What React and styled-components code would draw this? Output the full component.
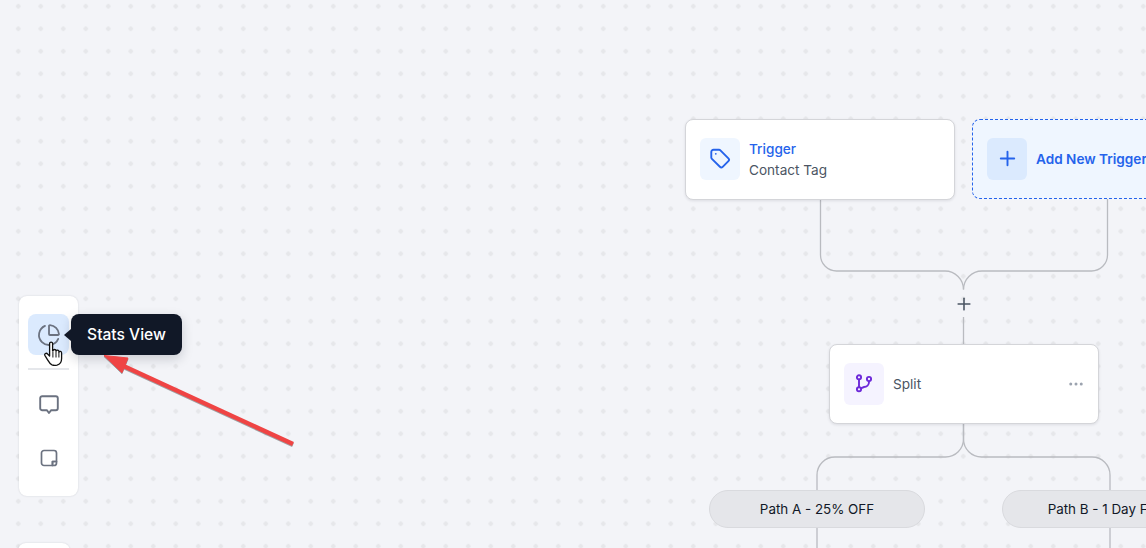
import React from 'react';
import styled, { createGlobalStyle } from 'styled-components';
import { Plus, ChartPie, Ellipsis } from 'lucide-react';

const Global = createGlobalStyle`
html, body {
  margin: 0;
  padding: 0;
  width: 100%;
  height: 100%;
  overflow: hidden;
}
body {
  font-family: Inter, "Liberation Sans", sans-serif;
}
`;

const Canvas = styled.div`
  position: relative;
  width: 1146px;
  height: 548px;
  overflow: hidden;
  background-color: #f3f4f8;
  background-image: radial-gradient(circle, #e6e7ea 2px, transparent 2.4px);
  background-size: 22.5px 22.5px;
  background-position: 7px -5px;
`;

const Wires = styled.svg`
  position: absolute;
  inset: 0;
  width: 1146px;
  height: 548px;
  pointer-events: none;
`;

const Node = styled.div`
  position: absolute;
  left: ${(p) => p.$x}px;
  top: ${(p) => p.$y}px;
  width: ${(p) => p.$w || 270}px;
  height: ${(p) => p.$h || 80.5}px;
  box-sizing: border-box;
  display: flex;
  align-items: center;
  gap: 9px;
  padding: 0 14px;
  border-radius: 8px;
  background: #fff;
  border: 1px solid #d4d5d9;
  box-shadow: 0 1px 3px rgba(17, 24, 39, 0.1);
`;

const AddNode = styled(Node)`
  background: #eff6ff;
  border: 1px dashed #2563eb;
  box-shadow: none;
`;

const IconTile = styled.div`
  flex: none;
  box-sizing: border-box;
  width: 40px;
  height: 42px;
  padding-bottom: ${(p) => (p.$lift ? 2 : 0)}px;
  border-radius: 6px;
  display: flex;
  align-items: center;
  justify-content: center;
  background: ${(p) => p.$bg};
  color: ${(p) => p.$fg};
`;

const NodeText = styled.div`
  display: flex;
  flex-direction: column;
  gap: 4px;
  padding-top: 2px;
  font-size: 13.6px;
  line-height: 17px;
`;

const NodeTitle = styled.span`
  color: #2563eb;
  font-weight: 500;
`;

const NodeSub = styled.span`
  color: #4b5563;
  font-size: 13.6px;
`;

const AddLabel = styled.span`
  color: #2563eb;
  font-size: 13.6px;
  font-weight: 600;
  white-space: nowrap;
`;

const NodeMenu = styled.div`
  margin-left: auto;
  margin-right: -1px;
  display: flex;
  color: #9ca3af;
`;

const Pill = styled.div`
  position: absolute;
  left: ${(p) => p.$x}px;
  top: 490px;
  width: 216px;
  height: 38px;
  box-sizing: border-box;
  display: flex;
  align-items: center;
  justify-content: center;
  border-radius: 19px;
  border: 1px solid #d9dade;
  background: #e5e6ea;
  color: #111827;
  font-size: 13.4px;
  white-space: nowrap;
`;

const AddStep = styled.div`
  position: absolute;
  left: 953.5px;
  top: 294px;
  width: 20px;
  height: 20px;
  display: flex;
  color: #4b5563;
`;

const Dock = styled.div`
  position: absolute;
  left: 19px;
  top: 296px;
  display: flex;
  flex-direction: column;
  gap: 47px;
`;

const Panel = styled.div`
  width: 59px;
  box-sizing: border-box;
  display: flex;
  flex-direction: column;
  align-items: center;
  padding: 18px 9px 0;
  height: 200px;
  border-radius: 8px;
  background: #fff;
  box-shadow: 0 0 2px rgba(17, 24, 39, 0.16);
`;

const MiniPanel = styled(Panel)`
  width: 52px;
  margin-left: -1px;
  height: 40px;
`;

const ToolButton = styled.div`
  position: relative;
  flex: none;
  width: 41px;
  height: ${(p) => p.$h || 41}px;
  border-radius: 8px;
  display: flex;
  align-items: center;
  justify-content: center;
  color: #6b7280;
  background: ${(p) => (p.$active ? '#dbeafe' : 'transparent')};
`;

const Divider = styled.div`
  flex: none;
  width: 41px;
  height: 2px;
  margin: 13px 0;
  background: #e5e7eb;
`;

const Tip = styled.div`
  position: absolute;
  left: 43px;
  top: 0;
  width: 111px;
  height: 41px;
  box-sizing: border-box;
  display: flex;
  align-items: center;
  justify-content: center;
  border-radius: 8px;
  background: #111827;
  color: #fff;
  font-size: 15.6px;
  font-weight: 500;
  white-space: nowrap;
  box-shadow: 0 4px 12px rgba(17, 24, 39, 0.18);

  &::before {
    content: '';
    position: absolute;
    left: -7px;
    top: 15px;
    border-style: solid;
    border-width: 6px 7px 6px 0;
    border-color: transparent #111827 transparent transparent;
  }
`;

const Hand = styled.svg`
  position: absolute;
  left: 16px;
  top: 27px;
  width: 20px;
  height: 26px;
`;

const Annotation = styled.svg`
  position: absolute;
  left: 90px;
  top: 345px;
  width: 220px;
  height: 110px;
  pointer-events: none;
  filter: drop-shadow(0 1px 0.5px rgba(0, 0, 0, 0.35));
`;

const wire = { fill: 'none', stroke: '#b9bbc0', strokeWidth: 1.3 };

function TagIcon() {
  return (
    <svg width="21" height="21" viewBox="0 0 21 21" fill="none" stroke="currentColor" strokeWidth="1.900" strokeLinejoin="round">
      <path d="M3.500 1.700H9a2 2 0 0 1 1.400.6l8 8a2 2 0 0 1 0 2.800l-5.700 5.700a2 2 0 0 1-2.800 0l-8-8a2 2 0 0 1-.6-1.400V3.900a2.200 2.200 0 0 1 2.200-2.200z" />
      <circle cx="5.800" cy="5.800" r="0.900" fill="currentColor" stroke="none" />
    </svg>
  );
}

function CommentIcon() {
  return (
    <svg width="20" height="20" viewBox="0 0 20 20" fill="none" stroke="currentColor" strokeWidth="1.900" strokeLinejoin="round">
      <path d="M3.200 1.200h13.600a2 2 0 0 1 2 2v10a2 2 0 0 1-2 2h-4.600L10 18l-2.200-2.800H3.200a2 2 0 0 1-2-2v-10a2 2 0 0 1 2-2z" />
    </svg>
  );
}

function NoteIcon() {
  return (
    <svg width="18" height="18" viewBox="0 0 18 18" fill="none" stroke="currentColor" strokeWidth="1.700" strokeLinejoin="round">
      <path d="M4 1.500h10a2.500 2.500 0 0 1 2.500 2.500v8.500h-4v4H4a2.500 2.500 0 0 1-2.500-2.500V4A2.500 2.500 0 0 1 4 1.500z" />
      <path d="M12.500 12.500h4v1.500a2.500 2.500 0 0 1-2.500 2.500h-1.500z" />
    </svg>
  );
}

function SplitIcon() {
  return (
    <svg width="20" height="20" viewBox="0 0 20 20" fill="none" stroke="currentColor" strokeWidth="1.900">
      <circle cx="5" cy="3.300" r="2.100" />
      <circle cx="15" cy="5" r="2.100" />
      <circle cx="5" cy="15.300" r="2.100" />
      <path d="M5 5.400V13.200" />
      <path d="M15 7.100v.9a5 5 0 0 1-5 5l-3.200 1.300" />
    </svg>
  );
}

function App() {
  return (
    <Canvas>
      <Global />
      <Wires viewBox="0 0 1146 548">
        <path {...wire} d="M820.5 199V255a16 16 0 0 0 16 16H945a18.5 18.5 0 0 1 18.5 18.5" />
        <path {...wire} d="M1107.5 199V255a16 16 0 0 1 -16 16H982a18.5 18.5 0 0 0 -18.5 18.5" />
        <path {...wire} d="M963.5 317V345" />
        <path {...wire} d="M963.5 423V439a18 18 0 0 1 -18 18H835a18 18 0 0 0 -18 18V548" />
        <path {...wire} d="M963.5 423V439a18 18 0 0 0 18 18H1092a18 18 0 0 1 18 18V548" />
      </Wires>

      <Node $x={685} $y={119}>
        <IconTile $bg="#eff6ff" $fg="#2563eb" $lift>
          <TagIcon />
        </IconTile>
        <NodeText>
          <NodeTitle>Trigger</NodeTitle>
          <NodeSub>Contact Tag</NodeSub>
        </NodeText>
      </Node>

      <AddNode $x={972} $y={119} $h={80}>
        <IconTile $bg="#dbeafe" $fg="#2563eb" $lift>
          <Plus size={23} strokeWidth={2} />
        </IconTile>
        <AddLabel>Add New Trigger</AddLabel>
      </AddNode>

      <AddStep>
        <Plus size={20} strokeWidth={1.9} />
      </AddStep>

      <Node $x={829} $y={344} $h={79.5} $w={269.5}>
        <IconTile $bg="#f5f3ff" $fg="#6d28d9">
          <SplitIcon />
        </IconTile>
        <NodeSub>Split</NodeSub>
        <NodeMenu>
          <Ellipsis size={18} />
        </NodeMenu>
      </Node>

      <Pill $x={709}>Path A - 25% OFF</Pill>
      <Pill $x={1002}>Path B - 1 Day FREE</Pill>

      <Dock>
        <Panel>
          <ToolButton $active>
            <ChartPie size={24} strokeWidth={1.8} />
            <Tip>Stats View</Tip>
            <Hand viewBox="0 0 20 26">
              <path
                d="M5.600 2.600c0-2 3-2 3 0v7.200l.5-.1c.1-1.600 2.800-1.600 2.900 0l.1.4c.3-1.400 2.700-1.300 2.800.3l.1.6c.5-1.100 2.600-.9 2.600.9v5.600c0 3.400-2 6-4.600 6.600-1.500.3-3.600.3-5-.3-1.700-.8-3-2.600-4.400-5L1 14.600c-1-1.800 1.300-3.200 2.600-1.600l2 2z"
                fill="#fff"
                stroke="#111"
                strokeWidth="1.300"
                strokeLinejoin="round"
              />
              <path d="M8.900 10.500v6M12 10.500v6M14.900 11v5.500" fill="none" stroke="#111" strokeWidth="1" />
            </Hand>
          </ToolButton>
          <Divider />
          <ToolButton $h={44}>
            <CommentIcon />
          </ToolButton>
          <ToolButton $h={62}>
            <NoteIcon />
          </ToolButton>
        </Panel>
        <MiniPanel />
      </Dock>

      <Annotation viewBox="0 0 220 110">
        <path d="M203 99L27 18" fill="none" stroke="#ef4444" strokeWidth="4.500" />
        <path d="M14 10.500L38 13L32 27.700z" fill="#ef4444" stroke="#ef4444" strokeWidth="1" strokeLinejoin="round" />
      </Annotation>
    </Canvas>
  );
}

export default App;
